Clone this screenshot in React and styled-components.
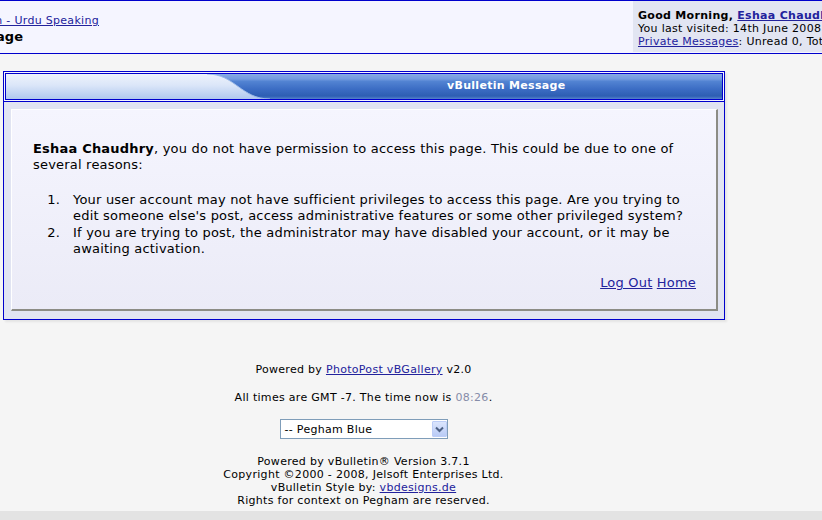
import React from 'react'
import styled, { createGlobalStyle } from 'styled-components'

const GlobalStyle = createGlobalStyle`
  html, body {
    margin: 0;
    padding: 0;
  }
  body {
    width: 822px;
    height: 520px;
    overflow: hidden;
    background: #f5f5f5;
    color: #000;
    font-family: "DejaVu Sans", Verdana, sans-serif;
  }
  a {
    color: #22229c;
  }
`

const TopBar = styled.div`
  display: flex;
  justify-content: space-between;
  height: 52px;
  background: #f5f5ff;
  border-top: 1px solid #0000cc;
  border-bottom: 1px solid #0000cc;
`

const Crumbs = styled.div`
  width: 99px;
  overflow: hidden;
  display: flex;
  flex-direction: column;
  align-items: flex-end;
  padding-top: 12px;
  white-space: nowrap;
`

const CrumbLink = styled.a`
  font-size: 11px;
  line-height: 15px;
  letter-spacing: 0.3px;
`

const CrumbTitle = styled.div`
  margin-right: 76px;
  font-size: 13px;
  font-weight: bold;
  line-height: 17px;
`

const Welcome = styled.div`
  width: 184px;
  height: 43px;
  padding: 8px 0 0 5px;
  box-sizing: content-box;
  background: #e2e5f2;
  font-size: 11px;
  line-height: 13px;
  letter-spacing: 0.3px;
  white-space: nowrap;
  overflow: hidden;
`

const Bold = styled.span`
  font-weight: bold;
`

const Main = styled.div`
  width: 727px;
`

const Panel = styled.div`
  margin: 17px 0 0 3px;
  width: 722px;
  box-sizing: border-box;
  border: 1px solid #0000cc;
  background: #f5f5ff;
  box-shadow: 2px 2px 2px rgba(0, 0, 0, 0.07);
`

const PanelHead = styled.div`
  display: flex;
  height: 25px;
  margin: 1px;
  border: 1px solid #0000cc;
`

const HeadLight = styled.div`
  width: 201px;
  background: linear-gradient(#eef3fc 0%, #dbe6f8 45%, #b0c8ef 100%);
`

const HeadDark = styled.div`
  flex: 1;
  padding-left: 177px;
  background: linear-gradient(
    #88abe5 0%,
    #729bdf 20%,
    #5283d2 30%,
    #3c6dc4 60%,
    #2d5eb3 88%,
    #5581cc 100%
  );
  color: #fff;
  font-size: 11px;
  font-weight: bold;
  letter-spacing: 0.3px;
  line-height: 24px;
`

const PanelBody = styled.div`
  border-top: 1px solid #0000cc;
  background: #e1e4f2;
  padding: 7px 6px 8px 7px;
`

const MessageBox = styled.div`
  border-top: 1px solid #ffffff;
  border-left: 1px solid #ffffff;
  border-right: 2px solid #8c8c85;
  border-bottom: 2px solid #8c8c85;
  background: linear-gradient(#f5f5fe, #ebebf7);
  padding: 31px 20px 18px 21px;
  font-size: 13px;
  line-height: 16.3px;
  letter-spacing: 0.2px;
`

const Para = styled.p`
  margin: 0;
`

const Reasons = styled.ol`
  margin: 18.4px 0 0;
  padding-left: 40px;

  li::marker {
    content: counter(list-item) ".   ";
  }
`

const Actions = styled.div`
  margin-top: 17.8px;
  text-align: right;
`

const Footer = styled.div`
  text-align: center;
  font-size: 11px;
  line-height: 13px;
  letter-spacing: 0.3px;
`

const FooterLine = styled.div`
  margin-top: ${p => p.$gap}px;
`

const Time = styled.span`
  color: #868ca8;
`

const StyleSelect = styled.div`
  display: flex;
  align-items: center;
  justify-content: space-between;
  width: 168px;
  height: 20px;
  box-sizing: border-box;
  margin: 15px auto 0;
  padding-left: 4px;
  border: 1px solid #7f9db9;
  background: #fff;
  font-size: 11px;
  text-align: left;
`

const SelectButton = styled.div`
  display: flex;
  align-items: center;
  justify-content: center;
  width: 15px;
  height: 16px;
  box-sizing: border-box;
  border: 1px solid #bccdf7;
  border-radius: 1px;
  background: linear-gradient(#dbe5fd, #b9cbf6);
`

const Credits = styled.div`
  margin-top: 16px;
`

const BottomStrip = styled.div`
  height: 12px;
  margin-top: 4px;
  background: #e3e3e3;
`

const HeadCurve = () => (
  <svg width="63" height="25" viewBox="0 0 63 25" preserveAspectRatio="none">
    <defs>
      <linearGradient id="curveDark" x1="0" y1="0" x2="0" y2="1">
        <stop offset="0" stopColor="#88abe5" />
        <stop offset="0.2" stopColor="#729bdf" />
        <stop offset="0.3" stopColor="#5283d2" />
        <stop offset="0.6" stopColor="#3c6dc4" />
        <stop offset="0.88" stopColor="#2d5eb3" />
        <stop offset="1" stopColor="#5581cc" />
      </linearGradient>
      <linearGradient id="curveLight" x1="0" y1="0" x2="0" y2="1">
        <stop offset="0" stopColor="#eef3fc" />
        <stop offset="0.45" stopColor="#dbe6f8" />
        <stop offset="1" stopColor="#b0c8ef" />
      </linearGradient>
    </defs>
    <rect width="63" height="25" fill="url(#curveDark)" />
    <path d="M0,0 C28,0 34,25 63,25 L0,25 Z" fill="url(#curveLight)" />
    <path d="M0,0 C28,0 34,25 63,25" fill="none" stroke="#9dbbe9" strokeWidth="1" />
  </svg>
)

const Chevron = () => (
  <svg width="9" height="7" viewBox="0 0 9 7">
    <polyline points="1,1.5 4.5,5 8,1.5" fill="none" stroke="#4d6185" strokeWidth="2" />
  </svg>
)

export default function App() {
  return (
    <>
      <GlobalStyle />
      <TopBar>
        <Crumbs>
          <CrumbLink href="#">Pegham - Urdu Speaking</CrumbLink>
          <CrumbTitle>vBulletin Message</CrumbTitle>
        </Crumbs>
        <Welcome>
          <div>
            <Bold>Good Morning, <a href="#">Eshaa Chaudhry</a>.</Bold>
          </div>
          <div>You last visited: 14th June 2008 at 08:14</div>
          <div>
            <a href="#">Private Messages</a>: Unread 0, Total 0.
          </div>
        </Welcome>
      </TopBar>

      <Main>
        <Panel>
          <PanelHead>
            <HeadLight />
            <HeadCurve />
            <HeadDark>vBulletin Message</HeadDark>
          </PanelHead>
          <PanelBody>
            <MessageBox>
              <Para>
                <Bold>Eshaa Chaudhry</Bold>, you do not have permission to access this page. This
                could be due to one of several reasons:
              </Para>
              <Reasons>
                <li>
                  Your user account may not have sufficient privileges to access this page. Are you
                  trying to edit someone else's post, access administrative features or some other
                  privileged system?
                </li>
                <li>
                  If you are trying to post, the administrator may have disabled your account, or it
                  may be awaiting activation.
                </li>
              </Reasons>
              <Actions>
                <a href="#">Log Out</a> <a href="#">Home</a>
              </Actions>
            </MessageBox>
          </PanelBody>
        </Panel>

        <Footer>
          <FooterLine $gap={43}>
            Powered by <a href="#">PhotoPost vBGallery</a> v2.0
          </FooterLine>
          <FooterLine $gap={15}>
            All times are GMT -7. The time now is <Time>08:26</Time>.
          </FooterLine>
          <StyleSelect>
            <span>-- Pegham Blue</span>
            <SelectButton>
              <Chevron />
            </SelectButton>
          </StyleSelect>
          <Credits>
            <div>Powered by vBulletin® Version 3.7.1</div>
            <div>Copyright ©2000 - 2008, Jelsoft Enterprises Ltd.</div>
            <div>
              vBulletin Style by: <a href="#">vbdesigns.de</a>
            </div>
            <div>Rights for context on Pegham are reserved.</div>
          </Credits>
        </Footer>
      </Main>
      <BottomStrip />
    </>
  )
}
